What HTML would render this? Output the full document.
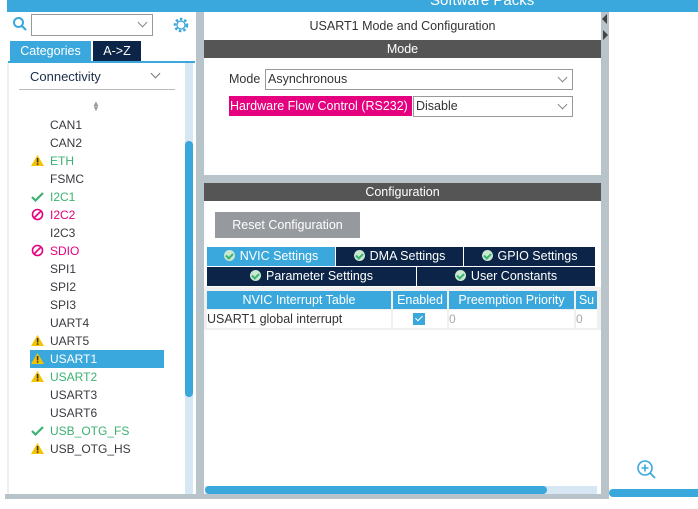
<!DOCTYPE html>
<html><head><meta charset="utf-8"><style>
*{margin:0;padding:0;box-sizing:border-box}
body{width:698px;height:509px;background:#fff;position:relative;overflow:hidden;font-family:"Liberation Sans",sans-serif;font-size:12px;color:#333}
.a{position:absolute}
.it{position:absolute;left:50px;font-size:12px;color:#39393f}
.g{color:#3bb170}.p{color:#e4007f}
.ic{position:absolute;left:31px}
.tab{position:absolute;color:#fff;font-size:12.5px;text-align:center;line-height:19px;background:#0b2447}
.chk{display:inline-block;width:11px;height:11px;border-radius:50%;background:#c8e8d2;vertical-align:-1px;margin-right:5px;position:relative}
.chk:after{content:"";position:absolute;left:3px;top:2px;width:3px;height:5px;border:solid #3bb170;border-width:0 2px 2px 0;transform:rotate(45deg)}
.th{position:absolute;top:291px;height:18px;background:#3aa8dc;color:#fff;font-size:12.5px;line-height:18px;text-align:center;overflow:hidden;white-space:nowrap}
.sel{position:absolute;border:1px solid #999;background:#fff;font-size:12.5px;line-height:18px;padding-left:2px;color:#333}
.sel:after{content:"";position:absolute;right:6px;top:4px;width:6px;height:6px;border:solid #888;border-width:0 1px 1px 0;transform:rotate(45deg)}
</style></head><body>
<div class="a" style="left:7px;top:0;width:691px;height:12px;background:#3aa8dc"></div>
<div class="a" style="left:430px;top:-8px;color:#fff;font-size:15px">Software Packs</div>
<!-- left panel -->
<svg class="a" style="left:12px;top:16px" width="16" height="16"><circle cx="6.5" cy="6.5" r="4.5" fill="none" stroke="#3aa8dc" stroke-width="2"/><path d="M10 10l4 4" stroke="#3aa8dc" stroke-width="2.2"/></svg>
<div class="sel" style="left:31px;top:14px;width:122px;height:22px"></div>
<svg class="a" style="left:172px;top:16px" width="18" height="18"><circle cx="9" cy="9" r="6" fill="none" stroke="#3aa8dc" stroke-width="2.5" stroke-dasharray="2.5 2"/><circle cx="9" cy="9" r="4" fill="none" stroke="#3aa8dc" stroke-width="1.3"/></svg>
<div class="a" style="left:10px;top:41px;width:81px;height:20px;background:#3aa8dc;color:#fff;font-size:12.5px;line-height:20px;text-align:center">Categories</div>
<div class="a" style="left:93px;top:41px;width:48px;height:20px;background:#0b2447;color:#fff;font-size:12.5px;line-height:20px;text-align:center">A-&gt;Z</div>
<div class="a" style="left:8px;top:61px;width:187px;height:2px;background:#3aa8dc"></div>
<div class="a" style="left:7px;top:63px;width:2px;height:432px;background:#eee"></div>
<div class="a" style="left:30px;top:69px;font-size:13px;color:#1c2e4a">Connectivity</div>
<div class="a" style="left:152px;top:70px;width:7px;height:7px;border:solid #777;border-width:0 1px 1px 0;transform:rotate(45deg)"></div>
<div class="a" style="left:19px;top:89px;width:156px;height:1px;background:#bbb"></div>
<div class="a" style="left:92px;top:101px;color:#999;font-size:8px;line-height:5px">▲<br>▼</div>
<div class="it" style="top:118px">CAN1</div>
<div class="it" style="top:136px">CAN2</div>
<div class="it g" style="top:154px">ETH</div>
<div class="it" style="top:172px">FSMC</div>
<div class="it g" style="top:190px">I2C1</div>
<div class="it p" style="top:208px">I2C2</div>
<div class="it" style="top:226px">I2C3</div>
<div class="it p" style="top:244px">SDIO</div>
<div class="it" style="top:262px">SPI1</div>
<div class="it" style="top:280px">SPI2</div>
<div class="it" style="top:298px">SPI3</div>
<div class="it" style="top:316px">UART4</div>
<div class="it" style="top:334px">UART5</div>
<div class="a" style="left:30px;top:350px;width:134px;height:18px;background:#3aa8dc"></div>
<div class="it" style="top:352px;color:#fff">USART1</div>
<div class="it g" style="top:370px">USART2</div>
<div class="it" style="top:388px">USART3</div>
<div class="it" style="top:406px">USART6</div>
<div class="it g" style="top:424px">USB_OTG_FS</div>
<div class="it" style="top:442px">USB_OTG_HS</div>
<svg class="a" style="left:0;top:0" width="50" height="470">
<defs><g id="w"><path d="M0 11L6.5 0L13 11Z" fill="#f5c400"/><rect x="5.8" y="3" width="1.6" height="4.5" fill="#333"/><rect x="5.8" y="8.3" width="1.6" height="1.5" fill="#333"/></g></defs>
<use href="#w" x="31" y="155"/><use href="#w" x="31" y="335"/><use href="#w" x="31" y="353"/><use href="#w" x="31" y="371"/><use href="#w" x="31" y="443"/>
<path d="M32 197l3.5 3.5L43 193" fill="none" stroke="#3bb170" stroke-width="2.2"/>
<path d="M32 431l3.5 3.5L43 427" fill="none" stroke="#3bb170" stroke-width="2.2"/>
<circle cx="37.5" cy="214.5" r="5" fill="none" stroke="#e4007f" stroke-width="1.6"/><path d="M34 218l7-7" stroke="#e4007f" stroke-width="1.6"/>
<circle cx="37.5" cy="250.5" r="5" fill="none" stroke="#e4007f" stroke-width="1.6"/><path d="M34 254l7-7" stroke="#e4007f" stroke-width="1.6"/>
</svg>
<div class="a" style="left:185px;top:63px;width:8px;height:431px;background:#d6e6f3"></div>
<div class="a" style="left:185px;top:141px;width:8px;height:256px;background:#3aa8dc;border-radius:4px"></div>
<div class="a" style="left:196px;top:12px;width:8px;height:487px;background:#b9c3ca"></div>
<div class="a" style="left:5px;top:494px;width:600px;height:5px;background:#b9c3ca"></div>
<!-- middle -->
<div class="a" style="left:204px;top:19px;width:397px;text-align:center;font-size:12.5px">USART1 Mode and Configuration</div>
<div class="a" style="left:204px;top:40px;width:397px;height:18px;background:#545554;color:#fff;text-align:center;font-size:12.5px;line-height:18px">Mode</div>
<div class="a" style="left:229px;top:72px;font-size:12.5px">Mode</div>
<div class="sel" style="left:265px;top:69px;width:308px;height:21px">Asynchronous</div>
<div class="a" style="left:229px;top:96px;width:183px;height:20px;background:#e4007f;color:#fff;font-size:12.5px;line-height:20px;padding-left:1px">Hardware Flow Control (RS232)</div>
<div class="sel" style="left:413px;top:96px;width:160px;height:21px">Disable</div>
<div class="a" style="left:204px;top:175px;width:397px;height:8px;background:#b9c3ca"></div>
<div class="a" style="left:204px;top:183px;width:397px;height:18px;background:#545554;color:#fff;text-align:center;font-size:12.5px;line-height:18px">Configuration</div>
<div class="a" style="left:215px;top:212px;width:145px;height:26px;background:#969a9e;color:#fff;text-align:center;font-size:12.5px;line-height:26px">Reset Configuration</div>
<div class="tab" style="left:207px;top:247px;width:128px;background:#3aa8dc"><span class="chk"></span>NVIC Settings</div>
<div class="tab" style="left:336px;top:247px;width:127px"><span class="chk"></span>DMA Settings</div>
<div class="tab" style="left:464px;top:247px;width:131px"><span class="chk"></span>GPIO Settings</div>
<div class="tab" style="left:207px;top:267px;width:209px"><span class="chk"></span>Parameter Settings</div>
<div class="tab" style="left:417px;top:267px;width:178px"><span class="chk"></span>User Constants</div>
<div class="a" style="left:204px;top:287px;width:397px;height:43px;background:#f0f0f0"></div>
<div class="th" style="left:207px;width:184px">NVIC Interrupt Table</div>
<div class="th" style="left:393px;width:54px">Enabled</div>
<div class="th" style="left:449px;width:125px">Preemption Priority</div>
<div class="th" style="left:576px;width:21px">Su</div>
<div class="a" style="left:207px;top:310px;width:184px;height:18px;background:#fff;font-size:12.5px;line-height:18px">USART1 global interrupt</div>
<div class="a" style="left:393px;top:310px;width:54px;height:18px;background:#fff"></div>
<div class="a" style="left:413px;top:313px;width:12px;height:12px;background:#3aa8dc"></div>
<div class="a" style="left:417px;top:314px;width:4px;height:7px;border:solid #fff;border-width:0 1.5px 1.5px 0;transform:rotate(45deg)"></div>
<div class="a" style="left:449px;top:310px;width:125px;height:18px;background:#fff;color:#aaa;line-height:18px">0</div>
<div class="a" style="left:576px;top:310px;width:21px;height:18px;background:#fff;color:#aaa;line-height:18px">0</div>
<div class="a" style="left:205px;top:486px;width:392px;height:8px;background:#d6e6f3"></div>
<div class="a" style="left:205px;top:486px;width:342px;height:8px;background:#3aa8dc;border-radius:4px"></div>
<!-- right separator -->
<div class="a" style="left:601px;top:12px;width:8px;height:487px;background:#b9c3ca"></div>
<div class="a" style="left:602px;top:14px;width:0;height:0;border:5px solid transparent;border-right-color:#444;border-left:0"></div>
<div class="a" style="left:603px;top:30px;width:0;height:0;border:5px solid transparent;border-left-color:#444;border-right:0"></div>
<svg class="a" style="left:635px;top:458px" width="24" height="24"><circle cx="10" cy="10" r="7" fill="none" stroke="#3aa8dc" stroke-width="1.6"/><path d="M10 6.5v7M6.5 10h7M15 15l5 5" stroke="#3aa8dc" stroke-width="1.6"/></svg>
<div class="a" style="left:609px;top:489px;width:89px;height:8px;background:#3aa8dc;border-radius:4px 0 0 4px"></div>
</body></html>
